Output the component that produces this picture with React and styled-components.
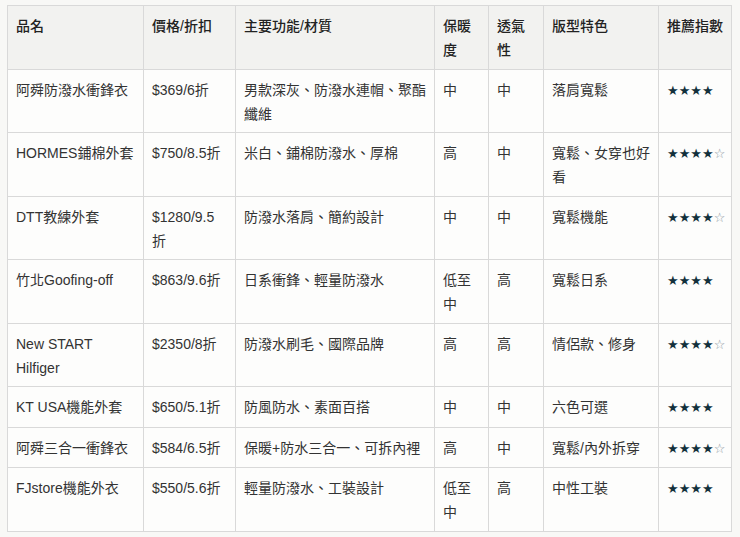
import styled, { createGlobalStyle } from "styled-components";

const GlobalStyle = createGlobalStyle`
    html, body {
        margin: 0;
        padding: 0;
        background: #f8f8f6;
    }
    body {
        font-family: "Liberation Sans", "Noto Sans CJK TC", sans-serif;
        font-size: 14px;
        color: #333;
    }
`

const Page = styled.div`
    padding: 5px 0 0 7px;
`

const Table = styled.table`
    width: 724px;
    table-layout: fixed;
    border-collapse: collapse;
    background: #fdfdfc;
`

const HeadCell = styled.th`
    background: #f2f2f0;
    border: 1px solid #d9d9d9;
    padding: 8px 8px 6.5px;
    line-height: 24px;
    text-align: left;
    vertical-align: top;
    font-weight: 500;
    color: #222;
`

const Cell = styled.td`
    border: 1px solid #d9d9d9;
    padding: 8px 8px 6.5px;
    line-height: 24px;
    vertical-align: top;
    color: #333;
    word-break: break-word;
`

const Stars = styled.span`
    font-family: "DejaVu Sans", sans-serif;
    font-size: 13px;
    white-space: nowrap;
    color: #12303b;
`

const Hollow = styled.span`
    color: #8a979c;
`

const columns = [
    { label: "品名", width: 136 },
    { label: "價格/折扣", width: 92 },
    { label: "主要功能/材質", width: 199 },
    { label: "保暖度", width: 54 },
    { label: "透氣性", width: 55 },
    { label: "版型特色", width: 115 },
    { label: "推薦指數", width: 73 },
]

const rows = [
    ["阿舜防潑水衝鋒衣", "$369/6折", "男款深灰、防潑水連帽、聚酯纖維", "中", "中", "落肩寬鬆", 4],
    ["HORMES鋪棉外套", "$750/8.5折", "米白、鋪棉防潑水、厚棉", "高", "中", "寬鬆、女穿也好看", 4.5],
    ["DTT教練外套", "$1280/9.5折", "防潑水落肩、簡約設計", "中", "中", "寬鬆機能", 4.5],
    ["竹北Goofing-off", "$863/9.6折", "日系衝鋒、輕量防潑水", "低至中", "高", "寬鬆日系", 4],
    ["New START Hilfiger", "$2350/8折", "防潑水刷毛、國際品牌", "高", "高", "情侶款、修身", 4.5],
    ["KT USA機能外套", "$650/5.1折", "防風防水、素面百搭", "中", "中", "六色可選", 4],
    ["阿舜三合一衝鋒衣", "$584/6.5折", "保暖+防水三合一、可拆內裡", "高", "中", "寬鬆/內外拆穿", 4.5],
    ["FJstore機能外衣", "$550/5.6折", "輕量防潑水、工裝設計", "低至中", "高", "中性工裝", 4],
]

function Rating({ value }) {
    const full = Math.floor(value)
    return (
        <Stars>
            {"★".repeat(full)}
            {value > full ? <Hollow>☆</Hollow> : null}
        </Stars>
    )
}

export default function App() {
    return (
        <Page>
            <GlobalStyle />
            <Table>
                <colgroup>
                    {columns.map((c) => <col key={c.label} style={{ width: c.width }} />)}
                </colgroup>
                <thead>
                    <tr>
                        {columns.map((c) => <HeadCell key={c.label}>{c.label}</HeadCell>)}
                    </tr>
                </thead>
                <tbody>
                    {rows.map((r) => (
                        <tr key={r[0]}>
                            {r.slice(0, 6).map((v, i) => <Cell key={i}>{v}</Cell>)}
                            <Cell><Rating value={r[6]} /></Cell>
                        </tr>
                    ))}
                </tbody>
            </Table>
        </Page>
    )
}
